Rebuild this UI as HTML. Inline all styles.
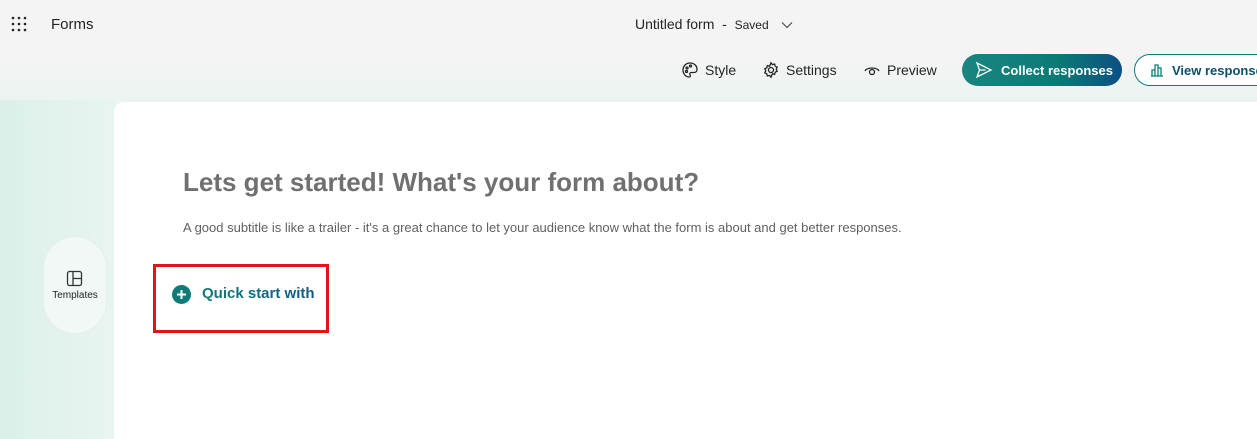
<!DOCTYPE html>
<html><head><style>
*{margin:0;padding:0;box-sizing:border-box}
html,body{width:1257px;height:439px;overflow:hidden}
body{font-family:"Liberation Sans",sans-serif;position:relative;
background:linear-gradient(180deg,#f4f4f4 0px,#f4f4f4 60px,#e9f4f0 110px,#e2f2ec 439px);}
.bgl{position:absolute;left:0;top:100px;width:114px;height:339px;background:linear-gradient(90deg,#dbf0e8,#e8f4f0)}
.abs{position:absolute;white-space:nowrap}
.card{position:absolute;left:114px;top:102px;width:1143px;height:337px;background:#fff;border-radius:10px 0 0 0}
.nav{font-size:14px;color:#242424;display:flex;align-items:center;gap:6px}
</style></head><body>
<div class="bgl"></div>
<svg class="abs" style="left:11px;top:16px" width="16" height="16" viewBox="0 0 16 16" fill="#242424">
<circle cx="2" cy="2" r="1.3"/><circle cx="8" cy="2" r="1.3"/><circle cx="14" cy="2" r="1.3"/>
<circle cx="2" cy="8" r="1.3"/><circle cx="8" cy="8" r="1.3"/><circle cx="14" cy="8" r="1.3"/>
<circle cx="2" cy="14" r="1.3"/><circle cx="8" cy="14" r="1.3"/><circle cx="14" cy="14" r="1.3"/></svg>
<div class="abs" style="left:51px;top:16px;font-size:15px;color:#242424">Forms</div>
<div class="abs" style="left:635px;top:16px;font-size:14px;color:#242424">Untitled form &nbsp;- &nbsp;<span style="font-size:12px">Saved</span>
<svg width="12" height="8" viewBox="0 0 12 8" style="margin-left:8px"><path d="M1 1.5l5 5 5-5" stroke="#444" fill="none" stroke-width="1.1"/></svg></div>

<div class="abs nav" style="left:681px;top:61px">
<svg width="18" height="18" viewBox="0 0 18 18" fill="none" stroke="#242424" stroke-width="1.3"><path d="M9 2C5 2 2 5 2 9s3 7 6 7c1.5 0 1.5-1.5 1-2.5s0-2 1.5-2H13c2 0 3-1.5 3-3C16 4.5 13 2 9 2z"/><circle cx="6" cy="7" r="1"/><circle cx="9.5" cy="5" r="1"/><circle cx="5.5" cy="10.5" r="1"/></svg>Style</div>
<div class="abs nav" style="left:762px;top:61px">
<svg width="18" height="18" viewBox="0 0 18 18" fill="none" stroke="#242424" stroke-width="1.3"><circle cx="9" cy="9" r="2.5"/><path d="M9 1.8l1.4 1.8 2.2-.6.6 2.2 2 1-1 2 1 2-2 1-.6 2.2-2.2-.6L9 16.2l-1.4-1.8-2.2.6-.6-2.2-2-1 1-2-1-2 2-1 .6-2.2 2.2.6z"/></svg>Settings</div>
<div class="abs nav" style="left:863px;top:61px">
<svg width="18" height="18" viewBox="0 0 18 18" fill="none" stroke="#242424" stroke-width="1.3"><path d="M2 10c2-4 12-4 14 0"/><circle cx="9" cy="11" r="2.5"/></svg>Preview</div>
<div class="abs" style="left:962px;top:54px;width:160px;height:32px;border-radius:16px;background:linear-gradient(90deg,#1a8580,#0b7a75 60%,#0c4f84);color:#fff;font-size:13px;font-weight:bold;display:flex;align-items:center;padding-left:13px;gap:8px">
<svg width="18" height="18" viewBox="0 0 18 18" fill="none" stroke="#fff" stroke-width="1.3"><path d="M2 2l14 7-14 7 2.5-7z M4.5 9h6"/></svg>Collect responses</div>
<div class="abs" style="left:1134px;top:54px;width:140px;height:32px;border-radius:16px;border:1px solid #0f7b76;background:#fff;color:#0b4f6c;font-size:13px;font-weight:bold;display:flex;align-items:center;padding-left:14px;gap:7px;overflow:hidden">
<svg width="16" height="16" viewBox="0 0 16 16" fill="none" stroke="#0f7b76" stroke-width="1.3"><path d="M2 14h12M3 14V8h3v6M6 14V3h3v11M9 14V6h3v8"/></svg>View responses</div>

<div class="card"></div>
<div class="abs" style="left:183px;top:167px;font-size:26px;font-weight:bold;color:#707070">Lets get started! What's your form about?</div>
<div class="abs" style="left:183px;top:220px;font-size:13px;color:#616161">A good subtitle is like a trailer - it's a great chance to let your audience know what the form is about and get better responses.</div>

<div class="abs" style="left:43px;top:236px;width:64px;height:98px;border-radius:32px;background:#f1f8f6;border:1px solid #e3efeb"></div>
<svg class="abs" style="left:66px;top:270px" width="17" height="17" viewBox="0 0 17 17" fill="none" stroke="#333" stroke-width="1.3"><rect x="1.5" y="1.5" width="14" height="14" rx="2"/><path d="M7 1.5v14M7 8.5h8.5"/></svg>
<div class="abs" style="left:43px;top:290px;width:64px;text-align:center;font-size:10px;color:#242424">Templates</div>

<div class="abs" style="left:153px;top:264px;width:176px;height:69px;border:3px solid #e0151b"></div>
<svg class="abs" style="left:172px;top:285px" width="19" height="19" viewBox="0 0 19 19"><circle cx="9.5" cy="9.5" r="9.5" fill="#0f7b76"/><path d="M9.5 5v9M5 9.5h9" stroke="#fff" stroke-width="2"/></svg>
<div class="abs" style="left:202px;top:285px;font-size:15px;font-weight:bold;background:linear-gradient(90deg,#0f7b76,#0d5a8a);-webkit-background-clip:text;color:transparent">Quick start with</div>
</body></html>
